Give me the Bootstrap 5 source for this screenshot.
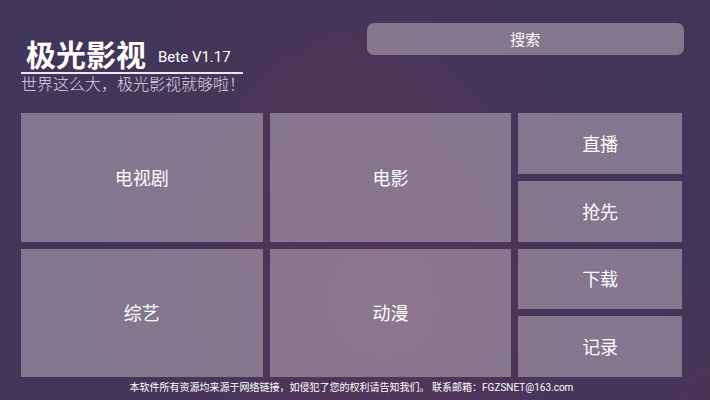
<!DOCTYPE html>
<html lang="zh-CN">
<head>
<meta charset="utf-8">
<meta name="viewport" content="width=device-width, initial-scale=1">
<title>极光影视</title>
<link href="https://cdn.jsdelivr.net/npm/bootstrap@5.3.0/dist/css/bootstrap.min.css" rel="stylesheet">
<style>
body {
  font-family: Roboto, "Noto Sans CJK SC", sans-serif;
  color: #fff;
  background:
    radial-gradient(ellipse 42% 75% at 54% 76%, rgba(88, 52, 90, .85), rgba(88, 52, 90, 0)),
    radial-gradient(ellipse 35% 60% at 48% 20%, rgba(78, 52, 88, .6), rgba(78, 52, 88, 0)),
    radial-gradient(ellipse 20% 40% at 100% 100%, rgba(78, 52, 88, .7), rgba(78, 52, 88, 0)),
    #403659;
}
.screen { padding: 23px 28px 0 21px; }
.top-bar { height: 90px; }
.brand { width: 222px; padding-top: 14px; }
.brand-line { height: 37px; padding-left: 5px; border-bottom: 2px solid #f0e6ee; }
.brand-name { font: 700 30px/32px STXingkai, "Noto Sans CJK SC", sans-serif; padding-bottom: 4px; }
.version { font-size: 15px; line-height: 24px; padding-top: 4px; }
.slogan { font-size: 16px; line-height: 22px; font-weight: 300; color: #ddd4e0; white-space: nowrap; }
.search-btn { width: 319px; max-width: 48%; height: 32px; margin-right: -2px; border-radius: 7px; font-size: 15px; line-height: 20px; }
.search-btn span { display: block; padding-top: 2px; }
.glass, .glass:hover { color: #fff; background: rgba(200, 190, 200, .48); border: 1px solid rgba(130, 120, 150, .25); }
.tiles { grid-template-columns: 242fr 242fr 164fr; grid-template-rows: repeat(4, 1fr); gap: 7px; }
.tile { font-size: 18px; line-height: 24px; border-radius: 0; min-height: 40px; }
.tile span { display: block; padding-top: 3px; }
.tile-big { grid-row: span 2; }
.notice { font-size: 10px; line-height: 22px; height: 23px; }
</style>
</head>
<body>
<div class="screen min-vh-100 d-flex flex-column">
  <header class="top-bar d-flex justify-content-between align-items-start">
    <div class="brand">
      <div class="brand-line d-flex align-items-center">
        <h1 class="brand-name mb-0">极光影视</h1>
        <span class="version ms-2 ps-1">Bete V1.17</span>
      </div>
      <p class="slogan mb-0">世界这么大，极光影视就够啦！</p>
    </div>
    <button type="button" class="search-btn btn glass p-0"><span>搜索</span></button>
  </header>
  <main class="tiles d-grid flex-grow-1">
    <button type="button" class="tile tile-big btn glass p-0"><span>电视剧</span></button>
    <button type="button" class="tile tile-big btn glass p-0"><span>电影</span></button>
    <button type="button" class="tile btn glass p-0"><span>直播</span></button>
    <button type="button" class="tile btn glass p-0"><span>抢先</span></button>
    <button type="button" class="tile tile-big btn glass p-0"><span>综艺</span></button>
    <button type="button" class="tile tile-big btn glass p-0"><span>动漫</span></button>
    <button type="button" class="tile btn glass p-0"><span>下载</span></button>
    <button type="button" class="tile btn glass p-0"><span>记录</span></button>
  </main>
  <footer class="notice text-center">本软件所有资源均来源于网络链接，如侵犯了您的权利请告知我们。 联系邮箱：FGZSNET@163.com</footer>
</div>
<script src="https://cdn.jsdelivr.net/npm/bootstrap@5.3.0/dist/js/bootstrap.bundle.min.js"></script>
</body>
</html>
